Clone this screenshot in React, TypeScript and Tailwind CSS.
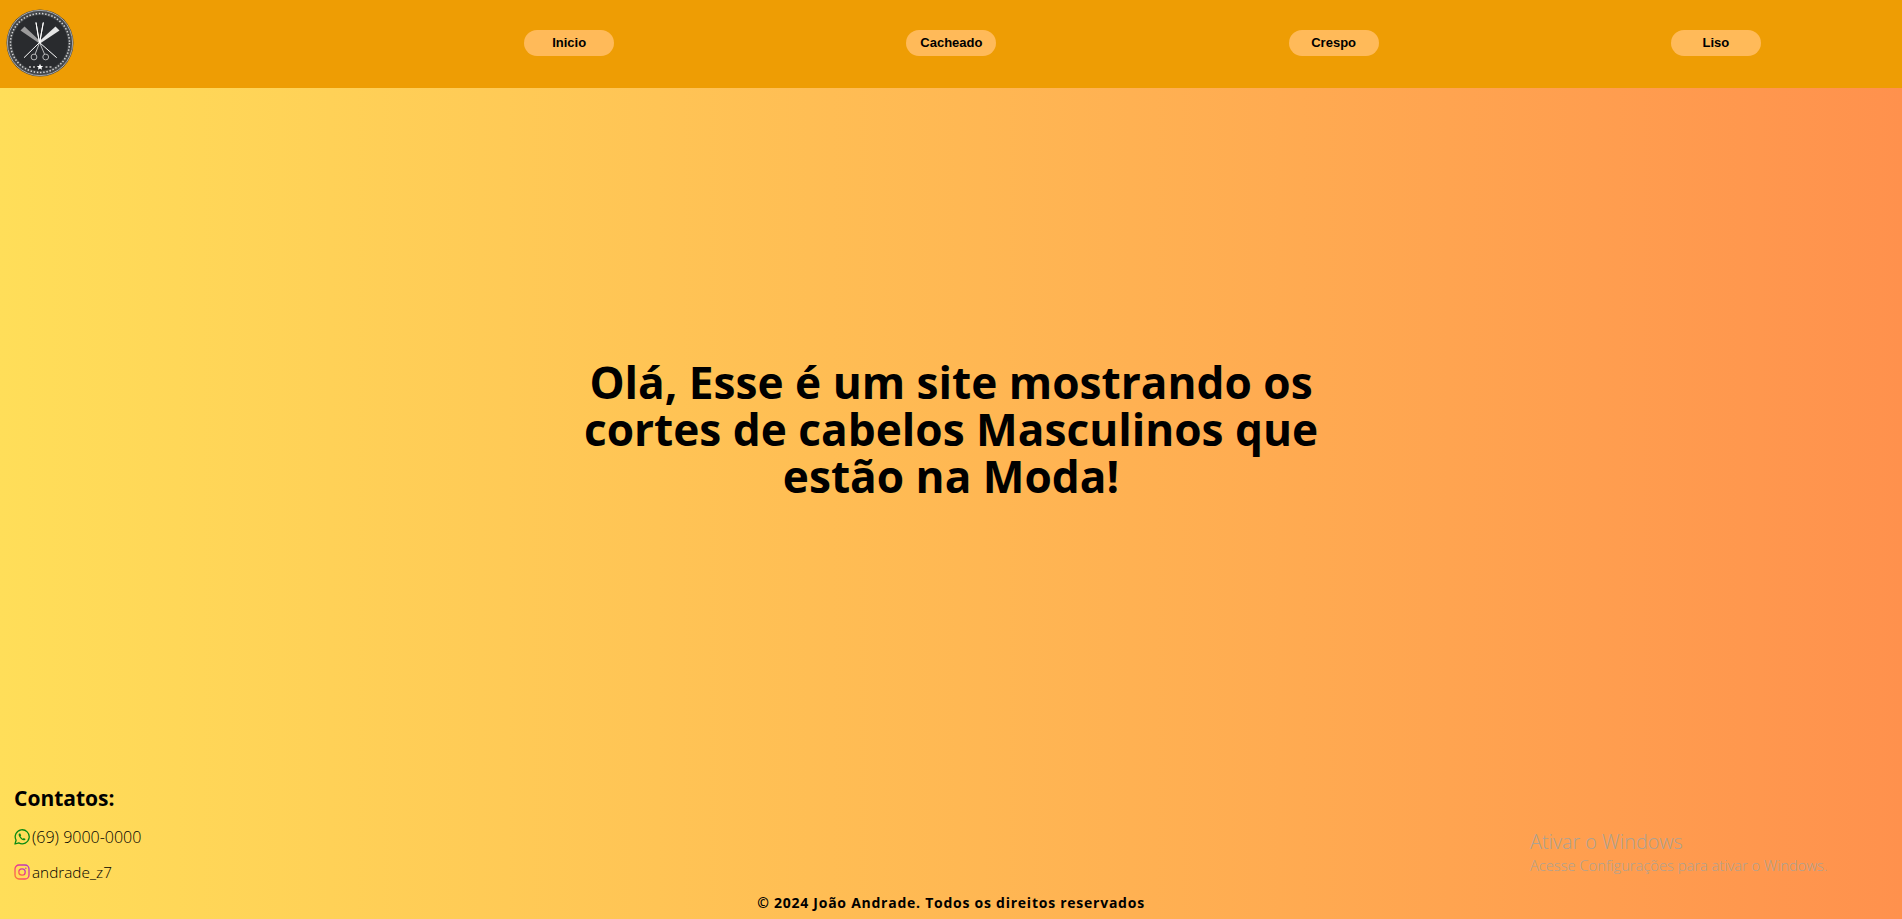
import React from 'react';

const Logo: React.FC = () => (
  <svg width="68" height="68" viewBox="0 0 68 68" className="block">
    <circle cx="34" cy="34" r="33.5" fill="#45484b" />
    <circle cx="34" cy="34" r="32.6" fill="none" stroke="#a5a7a9" strokeWidth="1" />
    <circle cx="34" cy="34" r="29.5" fill="none" stroke="#d8d8d8" strokeWidth="1.5" strokeDasharray="1.4 1.8" />
    <circle cx="34" cy="34" r="28" fill="#292b2e" />
    {/* combs */}
    <path d="M14.5 21.5 L18.5 17.5 L35 33 L33.5 34.5 Z" fill="#9c9c9c" />
    <path d="M53.5 21.5 L49.5 17.5 L32.5 33 L34 34.5 Z" fill="#e6e6e6" />
    <path d="M33.5 33.5 L18 48.7" stroke="#ffffff" strokeWidth="1" />
    <path d="M33.5 33.5 L50.7 48.7" stroke="#ffffff" strokeWidth="1" />
    {/* scissors */}
    <path d="M30 13.5 L33.6 34 L31.8 25 Z" fill="#ffffff" stroke="#ffffff" strokeWidth="1" strokeLinejoin="round" />
    <path d="M37.3 13.5 L33.6 34 L35.2 25 Z" fill="#ffffff" stroke="#ffffff" strokeWidth="1" strokeLinejoin="round" />
    <path d="M33.4 34 L29 45.5 M33.8 34 L38.7 45.5" stroke="#e0e0e0" strokeWidth="0.8" />
    <circle cx="28" cy="48" r="2.9" fill="none" stroke="#b5b5b5" strokeWidth="1" />
    <circle cx="39.7" cy="48" r="2.9" fill="none" stroke="#b5b5b5" strokeWidth="1" />
    {/* bottom stars */}
    <path d="M34 54.8 L35 56.9 L37.2 57.1 L35.5 58.5 L36 60.7 L34 59.5 L32 60.7 L32.5 58.5 L30.8 57.1 L33 56.9 Z" fill="#ffffff" />
    <rect x="23" y="57" width="2" height="2" fill="#9a9a9a" />
    <rect x="27" y="57" width="2" height="2" fill="#9a9a9a" />
    <rect x="39.5" y="57" width="2" height="2" fill="#9a9a9a" />
    <rect x="43.5" y="57" width="2" height="2" fill="#9a9a9a" />
  </svg>
);

const WhatsappIcon: React.FC = () => (
  <svg width="16" height="16" viewBox="0 0 16 16" fill="none" className="block shrink-0">
    <path d="M1 15 L2.1 11.2 A7 7 0 1 1 4.8 13.9 Z" stroke="#0b8a12" strokeWidth="1.3" strokeLinejoin="round" />
    <path d="M5.2 4.6 C4.4 5.2 4.5 6.4 5.3 7.8 C6.3 9.6 8.2 11.2 9.8 11.3 C10.8 11.3 11.5 10.7 11.5 9.9 L9.8 9 L9 9.8 C8 9.4 7 8.4 6.5 7.2 L7.2 6.4 L6.3 4.6 Z" fill="#0b8a12" />
  </svg>
);

const InstagramIcon: React.FC = () => (
  <svg width="16" height="16" viewBox="0 0 16 16" fill="none" className="block shrink-0">
    <defs>
      <linearGradient id="ig" x1="0" y1="1" x2="1" y2="0">
        <stop offset="0" stopColor="#ff7a2f" />
        <stop offset="0.5" stopColor="#f0368a" />
        <stop offset="1" stopColor="#a83ad0" />
      </linearGradient>
    </defs>
    <rect x="1" y="1" width="14" height="14" rx="4" stroke="url(#ig)" strokeWidth="1.3" />
    <circle cx="8" cy="8" r="3.2" stroke="url(#ig)" strokeWidth="1.3" />
    <circle cx="11.8" cy="4.2" r="0.8" fill="#c23ab5" />
  </svg>
);

const links = ['Inicio', 'Cacheado', 'Crespo', 'Liso'];

export default function App() {
  return (
    <div className="relative h-[919px] overflow-hidden flex flex-col bg-gradient-to-r from-[#ffde59] to-[#ff914d] text-black font-['Open_Sans',sans-serif]">
      <header className="h-[88px] shrink-0 bg-[#ee9d04] flex items-center pb-[2px]">
        <div className="w-[378px] shrink-0 pl-[6px]">
          <Logo />
        </div>
        <nav className="w-[1529px] shrink-0 flex justify-around">
          {links.map((link) => (
            <a
              key={link}
              href="#"
              className="w-[90px] h-[26px] rounded-[13px] bg-[#ffba59] flex items-center justify-center font-['Liberation_Sans',sans-serif] font-bold text-[13px]"
            >
              {link}
            </a>
          ))}
        </nav>
      </header>

      <main className="flex-1 flex items-center justify-center pb-[13px]">
        <h1 className="w-[760px] text-center font-bold text-[44.2px] leading-[47px]">
          Olá, Esse é um site mostrando os cortes de cabelos Masculinos que estão na Moda!
        </h1>
      </main>

      <section className="pl-[14px] pb-[11px]">
        <h2 className="font-bold text-[21px] leading-[28px] mb-[15px]">Contatos:</h2>
        <div className="flex items-center gap-[2px] text-[16px] font-light leading-[20px] mb-[15px]">
          <WhatsappIcon />
          <span>(69) 9000-0000</span>
        </div>
        <div className="flex items-center gap-[2px] text-[15.3px] font-light leading-[20px]">
          <InstagramIcon />
          <span>andrade_z7</span>
        </div>
      </section>

      <footer className="text-center font-bold text-[14px] tracking-[0.75px] leading-[20px] pb-[6px]">
        © 2024 João Andrade. Todos os direitos reservados
      </footer>

      <div className="absolute left-[1530px] top-[829px] text-[#aba294] font-['Open_Sans',sans-serif] font-light pointer-events-none">
        <div className="text-[19.8px] leading-[26px]">Ativar o Windows</div>
        <div className="text-[14.7px] leading-[20px]">Acesse Configurações para ativar o Windows.</div>
      </div>
    </div>
  );
}
